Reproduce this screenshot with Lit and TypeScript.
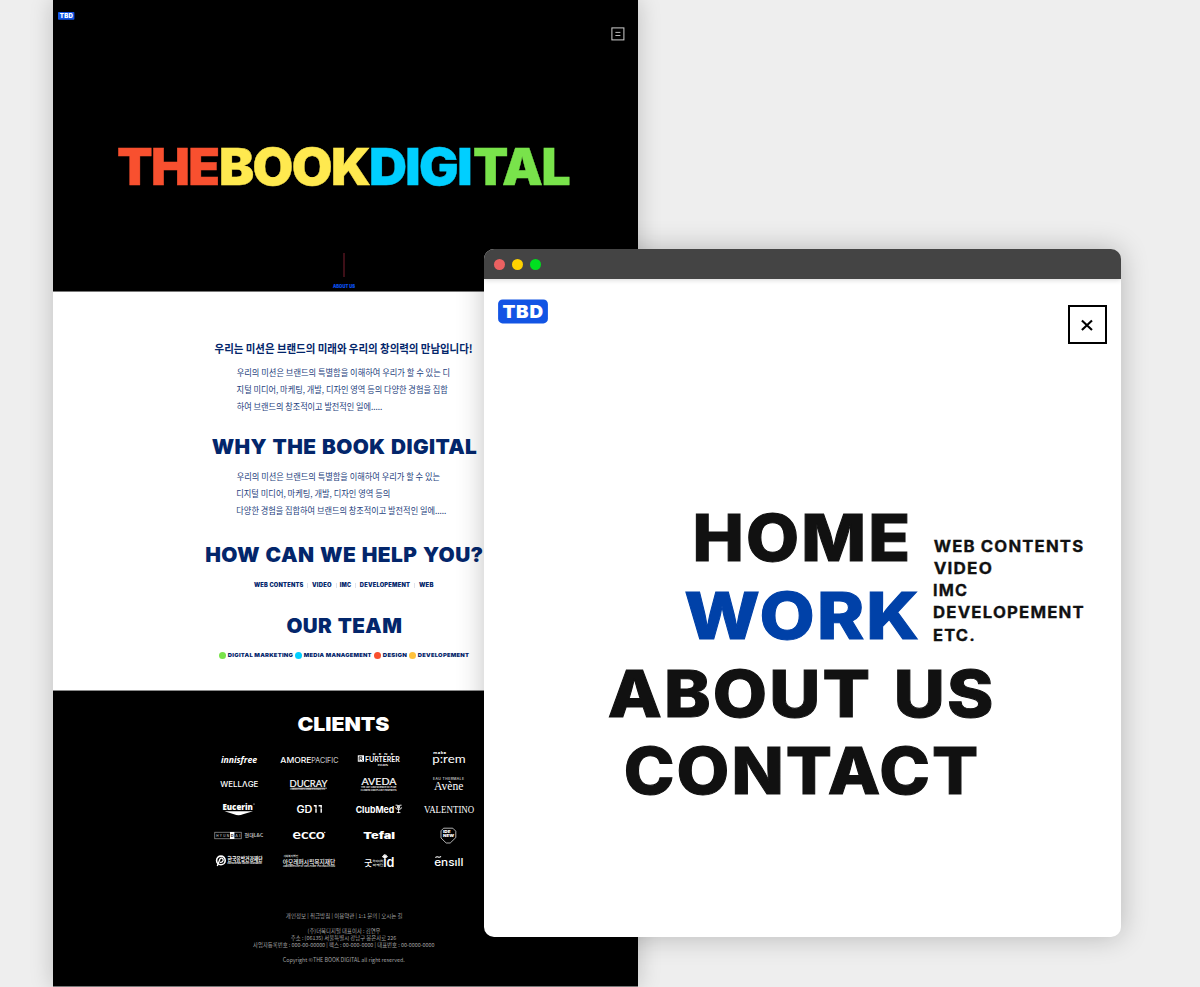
import { LitElement, html, svg, css } from "lit";
import { customElement } from "lit/decorators.js";

const SANS = 'Inter, "Liberation Sans", sans-serif';
const KR = '"Noto Sans CJK KR", "Noto Sans", sans-serif';
const SERIF = '"Liberation Serif", serif';

interface Face {
  font?: string;
  weight?: number;
  track?: number;
  words?: number;
  fill?: string;
  italic?: boolean;
  stroke?: number;
}

const pen = document.createElement("canvas").getContext("2d")!;

/* Real text whose visible extent runs exactly from x0 to x1 on the given baseline. */
function run(text: string, x0: number, x1: number, y: number, size: number, f: Face = {}) {
  const { font = SANS, weight = 800, track = 0, words = 0, fill = "#fff", italic = false, stroke = 0 } = f;
  pen.font = `${italic ? "italic " : ""}${weight} 100px ${font}`;
  const m = pen.measureText(text);
  const left = (-m.actualBoundingBoxLeft * size) / 100;
  const ink =
    ((m.actualBoundingBoxRight + m.actualBoundingBoxLeft) * size) / 100 +
    track * size * (Array.from(text).length - 1) +
    words * size * (text.split(" ").length - 1);
  const k = (x1 - x0) / ink;
  return svg`<text transform="translate(${x0 - left * k} ${y}) scale(${k} 1)"
    font-family=${font} font-weight=${weight} font-size=${size} font-style=${italic ? "italic" : "normal"}
    letter-spacing=${track * size} word-spacing=${words * size} fill=${fill} stroke=${fill} stroke-width=${stroke}>${text}</text>`;
}

/* A line of text as a block: width is the ink width, height the line box. */
function line(text: string, w: number, h: number, size: number, f: Face = {}, base = h, cls = "") {
  return html`<svg class="line ${cls}" width=${w} height=${h} viewBox="0 0 ${w} ${h}" role="img" aria-label=${text}>
    ${run(text, 0, w, base, size, f)}
  </svg>`;
}

const NAVY = "#03266b";
const navy: Face = { fill: NAVY, weight: 900, track: 0.02, words: 0.05 };
const tiny: Face = { fill: NAVY, weight: 900, track: 0.04 };
const body: Face = { fill: "#24407c", weight: 400, font: KR };
const foot: Face = { fill: "#a4a4a4", weight: 400, font: KR };

const ROWS = [
  [748, 24],
  [772, 25],
  [797, 25],
  [822, 27],
  [849, 25],
];

const LOGOS: unknown[][] = [
  [
    run("innisfree", 221, 257, 763, 8.8, { font: '"Open Sans"', weight: 700, italic: true }),
    svg`${run("AMORE", 280.5, 311, 762.6, 7.4, { weight: 500 })}${run("PACIFIC", 312, 338, 762.6, 7.4, { weight: 300 })}`,
    svg`<rect x="357.8" y="755.3" width="6.2" height="6.4" fill="#fff"/>
      <path d="M359.2 760.6V756.8h2.6v2h-2M361 759l1.8 1.6" fill="none" stroke="#000" stroke-width=".8"/>
      ${run("RENE", 373, 393, 754.8, 2.4, { weight: 600, track: 0.8 })}
      ${run("FURTERER", 365.5, 400, 762, 7.6, { font: "Lato", weight: 700 })}
      ${run("PARIS", 378, 388, 765.6, 2.6, { weight: 600 })}`,
    svg`${run("make", 433.5, 446, 754.4, 3.6, { weight: 700, track: 0.1 })}
      ${run("p:rem", 433.3, 464.8, 763.4, 11.4, { font: "Lato", weight: 400 })}`,
  ],
  [
    run("WELLΛGE", 220.5, 258, 787, 7.6, { weight: 500 }),
    svg`${run("DUCRAY", 290.3, 327.5, 787, 10.4, { font: "Lato", weight: 400, stroke: 0.2 })}
      <path d="M290.5 788.2H327" stroke="#fff" stroke-width=".6"/>
      ${run("LABORATOIRES DERMATOLOGIQUES", 290.5, 325, 790.4, 2, { weight: 500 })}`,
    svg`${run("AVEDA", 361.5, 396.5, 785.4, 9.8, { font: "Lato", weight: 400, stroke: 0.2 })}
      ${run("THE ART AND SCIENCE OF PURE", 361, 396.5, 788.2, 2, { weight: 600 })}
      ${run("FLOWER AND PLANT ESSENCES", 361, 396.5, 790.6, 2, { weight: 600 })}`,
    svg`${run("EAU THERMALE", 433.3, 464, 780.1, 2.8, { weight: 400, track: 0.12 })}
      ${run("Avène", 434, 463, 789.9, 11.6, { font: SERIF, weight: 400 })}`,
  ],
  [
    svg`${run("Eucerin", 223, 252.5, 809.6, 9.4, { font: '"Open Sans"', weight: 800 })}
      <circle cx="254" cy="804" r=".6" fill="#fff"/>
      <path d="M224.5 811.3H253L243 814.2Q238.5 816.2 234 814.2Z" fill="#fff"/>`,
    svg`${run("GD", 297, 312, 812.7, 9.8, { weight: 600 })}
      <path d="M313.8 805.8H316V812.8M318.6 805.8H321.2V812.8" stroke="#fff" stroke-width="1.4" fill="none"/>
      <path d="M314 808.2H323M305 808.7H308" stroke="#000" stroke-width=".5"/>`,
    svg`${run("ClubMed", 356, 393.8, 812.6, 9.2, { weight: 700 })}
      <path d="M395.6 805.2h2v3M401.6 805.2h-2v3M395.6 807.4q0 2 3 2t3-2M398.6 805V813M396.8 812.6h3.6" fill="none" stroke="#fff" stroke-width=".9"/>`,
    run("VALENTINO", 424, 474, 812.9, 11.4, { font: SERIF, weight: 400 }),
  ],
  [
    svg`<rect x="214.8" y="832.2" width="26.4" height="6.6" fill="none" stroke="#bbb" stroke-width=".6"/>
      <rect x="230" y="832" width="4.4" height="7" fill="#fff"/>
      ${run("HYUN", 216.5, 229, 837.1, 3.8, { weight: 500, track: 0.4, fill: "#ccc" })}
      ${run("D", 231, 233.4, 837.1, 3.8, { weight: 600, fill: "#111" })}
      ${run("AI", 235.2, 240, 837.1, 3.8, { weight: 500, track: 0.4, fill: "#ccc" })}
      ${run("현대L&C", 244.8, 263.2, 837.4, 5, { font: KR, weight: 500, fill: "#ccc" })}`,
    svg`${run("ecco", 293, 324.6, 839.4, 13.4, { font: "Lato", weight: 700 })}
      <circle cx="324.8" cy="832.4" r=".6" fill="#fff"/>`,
    run("Tefal", 363.5, 394.5, 838.8, 9.2, { weight: 900 }),
    svg`<path d="M443.6 828.2H452.8L455.8 831.2V837.6L450.2 843H446.2L441 838V830.8Z" fill="none" stroke="#ddd" stroke-width=".8"/>
      ${run("IDE", 443.2, 450.4, 833.2, 4, { weight: 900 })}
      ${run("NEW", 443.2, 454, 837.2, 4, { weight: 900 })}`,
  ],
  [
    svg`<circle cx="220.9" cy="860.4" r="4.3" fill="none" stroke="#fff" stroke-width="1.6"/>
      <path d="M217.3 866l2.5-6.6q1.2-2 2.7-.8t-.2 3.2q-1.2.8-2.2.3" fill="none" stroke="#fff" stroke-width="1.3"/>
      ${run("한국유방건강재단", 227.7, 262.6, 860.9, 5.8, { font: KR, weight: 700 })}
      ${run("Korea Breast Cancer Foundation", 227.7, 262, 864, 2.2, { weight: 600 })}`,
    svg`${run("사회복지법인", 283.5, 298, 857.2, 2.4, { font: KR, weight: 500 })}
      ${run("아모레퍼시픽복지재단", 283, 335, 863.5, 5.9, { font: KR, weight: 500 })}
      ${run("AMOREPACIFIC WELFARE FOUNDATION", 283, 335, 866.8, 2, { weight: 500 })}`,
    svg`${run("굿", 364.6, 372, 866.2, 8, { font: KR, weight: 500 })}
      ${run("아이디어", 373, 382.8, 862.3, 2.8, { font: KR, weight: 500 })}
      ${run("마케팅", 373, 382.8, 865.6, 2.8, { font: KR, weight: 500 })}
      ${run("ıd", 384, 393.6, 867, 13, { weight: 600 })}
      <path d="M384.9 859.4V857.8M382.2 856.6l1.5-.4-.4-1 .9.3.7-1.3.7 1.3.9-.3-.4 1 1.5.4-2.7 2Z" fill="#fff" stroke="#fff" stroke-width=".7"/>`,
    svg`${run("ensıll", 434.6, 462.6, 865.8, 10.6, { weight: 500 })}
      <path d="M435.4 857.6q1.4-1.4 2.8-.6t2.8-.6" fill="none" stroke="#fff" stroke-width="1.1"/>`,
  ],
];

@customElement("brand-badge")
class BrandBadge extends LitElement {
  static properties = { large: { type: Boolean } };
  declare large: boolean;
  static styles = css`
    :host { display: block; }
    svg { display: block; }
  `;
  render() {
    return this.large
      ? html`<svg width="50" height="25" viewBox="0 0 50 25">
          <rect x="0.1" y="0.4" width="49.8" height="24" rx="4.5" fill="#1254e4" />
          ${run("TBD", 4.8, 44.4, 18.9, 17.6, { weight: 900, track: 0.04 })}
        </svg>`
      : html`<svg width="17" height="8" viewBox="0 0 17 8">
          <rect x="0" y="0" width="16.4" height="7.8" rx="0.8" fill="#1254e4" />
          ${run("TBD", 1.9, 14.7, 5.9, 5.6, { weight: 900, track: 0.05 })}
        </svg>`;
  }
}

@customElement("landing-page")
class LandingPage extends LitElement {
  static styles = css`
    :host { display: block; width: 584.6px; height: 987px; box-sizing: border-box; background: #000;
      border-bottom: 1px solid #777; box-shadow: 0 0 22px rgba(0, 0, 0, 0.2); }
    .line { display: block; overflow: visible; flex: none; }
    .hero { height: 292px; box-sizing: border-box; border-bottom: 1px solid #777; background: #000; }
    .bar { display: flex; justify-content: space-between; height: 41px; padding: 12px 13px 0 5px; box-sizing: border-box; }
    .menu { display: block; margin-top: 15px; }
    .title { display: flex; padding: 106px 0 0 65.4px; }
    .book { margin-left: 2px; }
    .digi { margin-left: 1.5px; }
    .tal { margin-left: 2.8px; }
    .cue { display: flex; flex-direction: column; align-items: center; padding-right: 3px; margin-top: 68.8px; }
    .stick { width: 2px; height: 24px; background: #3d0f17; margin-bottom: 7px; }
    .about { height: 399px; box-sizing: border-box; background: #fff; border-bottom: 1px solid #8a8a8a;
      padding: 51px 3px 0 0; display: flex; flex-direction: column; align-items: center; }
    .copy { align-self: flex-start; margin-left: 184px; }
    .first { margin-top: 9px; }
    .why { margin-top: 25.6px; }
    .second { margin-top: 13.6px; }
    .how { margin-top: 29.6px; }
    .services { display: flex; align-items: center; margin-top: 20.8px; }
    .sep { width: 1px; height: 4.4px; background: #dfe3ec; margin: 0 3.9px; }
    .team { margin-top: 31.4px; }
    .roles { display: flex; align-items: center; margin-top: 18.6px; }
    .role { display: flex; align-items: center; gap: 2.3px; margin-right: 1.9px; }
    .role:last-child { margin-right: 0; }
    .dot { width: 7px; height: 7px; border-radius: 50%; }
    .green { background: #79e34b; }
    .cyan { background: #00cfff; }
    .red { background: #f8502f; }
    .amber { background: #ffc23d; }
    .clients { display: flex; flex-direction: column; align-items: center; padding: 26.4px 3px 0 0; }
    .grid { display: grid; grid-template-columns: repeat(4, 70px); margin-top: 16.4px; }
    .logo { display: block; overflow: visible; }
    .foot { display: flex; flex-direction: column; align-items: center; padding: 38px 3px 0 0; }
    .gap { height: 7.4px; }
  `;

  render() {
    const T: Face = { weight: 900, track: -0.03, stroke: 0.4 };
    return html`
      <div class="hero">
        <div class="bar">
          <brand-badge></brand-badge>
          <svg class="menu" width="14" height="14" viewBox="0 0 14 14">
            <rect x="0.9" y="0.9" width="12" height="12" fill="none" stroke="#cfcfcf" />
            <path d="M4.4 5.4H9.4M4.4 8.5H9.4" stroke="#cfcfcf" stroke-width="0.9" />
          </svg>
        </div>
        <div class="title">
          ${line("THE", 100.5, 37.2, 50.6, { ...T, fill: "#f8502f" }, 37.8)}
          ${line("BOOK", 149, 37.2, 50.6, { ...T, fill: "#ffe94f" }, 37.8, "book")}
          ${line("DIGI", 99.4, 37.2, 50.6, { ...T, fill: "#00cfff" }, 37.8, "digi")}
          ${line("TAL", 95.3, 37.2, 50.6, { ...T, fill: "#79e34b" }, 37.8, "tal")}
        </div>
        <div class="cue">
          <div class="stick"></div>
          ${line("ABOUT US", 22, 3.6, 4.7, { fill: "#0b4fe8", weight: 900, track: 0.02, stroke: 0.1 })}
        </div>
      </div>

      <div class="about">
        ${line("우리는 미션은 브랜드의 미래와 우리의 창의력의 만남입니다!", 257, 12, 11.4, { font: KR, weight: 700, fill: NAVY }, 10.4)}
        <div class="copy first">
          ${line("우리의 미션은 브랜드의 특별함을 이해하여 우리가 할 수 있는 디", 212.5, 16.8, 8.9, body, 12.2)}
          ${line("지털 미디어, 마케팅, 개발, 디자인 영역 등의 다양한 경험을 집합", 211, 16.8, 8.9, body, 12.2)}
          ${line("하여 브랜드의 창조적이고 발전적인 일에.....", 145, 16.8, 8.9, body, 12.2)}
        </div>
        ${line("WHY THE BOOK DIGITAL", 264.6, 14.4, 19.8, navy, 14.4, "why")}
        <div class="copy second">
          ${line("우리의 미션은 브랜드의 특별함을 이해하여 우리가 할 수 있는", 203, 16.8, 8.9, body, 12.2)}
          ${line("디지털 미디어, 마케팅, 개발, 디자인 영역 등의", 152.5, 16.8, 8.9, body, 12.2)}
          ${line("다양한 경험을 집합하여 브랜드의 창조적이고 발전적인 일에.....", 209, 16.8, 8.9, body, 12.2)}
        </div>
        ${line("HOW CAN WE HELP YOU?", 276.5, 14.4, 19.8, navy, 14.4, "how")}
        <div class="services">
          ${line("WEB CONTENTS", 49.4, 4.4, 5.6, tiny)}<span class="sep"></span>
          ${line("VIDEO", 19.4, 4.4, 5.6, tiny)}<span class="sep"></span>
          ${line("IMC", 11, 4.4, 5.6, tiny)}<span class="sep"></span>
          ${line("DEVELOPEMENT", 50, 4.4, 5.6, tiny)}<span class="sep"></span>
          ${line("WEB", 14.4, 4.4, 5.6, tiny)}
        </div>
        ${line("OUR TEAM", 114, 14.4, 19.8, navy, 14.4, "team")}
        <div class="roles">
          <div class="role"><i class="dot green"></i>${line("DIGITAL MARKETING", 65, 4.2, 5.4, tiny)}</div>
          <div class="role"><i class="dot cyan"></i>${line("MEDIA MANAGEMENT", 67.6, 4.2, 5.4, tiny)}</div>
          <div class="role"><i class="dot red"></i>${line("DESIGN", 23.8, 4.2, 5.4, tiny)}</div>
          <div class="role"><i class="dot amber"></i>${line("DEVELOPEMENT", 51, 4.2, 5.4, tiny)}</div>
        </div>
      </div>

      <div class="clients">
        ${line("CLIENTS", 91, 14.2, 19.4, { weight: 900 }, 14.4)}
        <div class="grid">
          ${LOGOS.map((row, r) =>
            row.map(
              (logo, c) => html`<svg class="logo" width="70" height=${ROWS[r][1]}
                viewBox="${204 + 70 * c} ${ROWS[r][0]} 70 ${ROWS[r][1]}">${logo}</svg>`
            )
          )}
        </div>
      </div>

      <div class="foot">
        ${line("개인정보 | 취급방침 | 이용약관 | 1:1 문의 | 오시는 길", 116.5, 7.2, 5.4, foot, 5.8)}
        <div class="gap"></div>
        ${line("(주)더북디지털 대표이사 : 김연우", 72.5, 7.2, 5.4, foot, 5.8)}
        ${line("주소 : (06135) 서울특별시 강남구 봉은사로 226", 105.5, 7.2, 5.4, foot, 5.8)}
        ${line("사업자등록번호 : 000-00-00000 | 팩스 : 00-000-0000 | 대표번호 : 00-0000-0000", 182, 7.2, 5.4, foot, 5.8)}
        <div class="gap"></div>
        ${line("Copyright ©THE BOOK DIGITAL all right reserved.", 122, 7.2, 5.5, foot, 5.8)}
      </div>
    `;
  }
}

@customElement("menu-window")
class MenuWindow extends LitElement {
  static styles = css`
    :host { display: block; width: 637px; height: 688px; border-radius: 10px; overflow: hidden; background: #fff;
      box-shadow: 0 0 28px rgba(0, 0, 0, 0.24); }
    .line { display: block; overflow: visible; flex: none; }
    .titlebar { display: flex; gap: 7px; align-items: center; height: 30px; padding-left: 10px; box-sizing: border-box;
      background: #444; box-shadow: 0 1px 5px rgba(0, 0, 0, 0.16); }
    .light { width: 11px; height: 11px; border-radius: 50%; }
    .close { background: #eb6161; }
    .min { background: #ffd200; }
    .max { background: #00e020; }
    .top { display: flex; justify-content: space-between; padding: 20px 14.5px 0 14px; height: 65px; box-sizing: border-box; }
    .x { display: block; margin-top: 6px; }
    .main { display: flex; padding: 170px 0 0 124px; }
    .nav { display: flex; flex-direction: column; align-items: center; gap: 30.8px; width: 385px; }
    .home { transform: translateX(1px); }
    .work { transform: translateX(0.8px); }
    .about { transform: translateX(-0.8px); }
    .contact { transform: translateX(0.5px); }
    .sub { display: flex; flex-direction: column; gap: 10.5px; margin: 27px 0 0 -58.8px; }
  `;

  render() {
    const big: Face = { fill: "#111", weight: 800, track: 0.03, words: 0.06, stroke: 1 };
    const sub: Face = { fill: "#111", weight: 700, track: 0.07, stroke: 0.3 };
    return html`
      <div class="titlebar">
        <span class="light close"></span><span class="light min"></span><span class="light max"></span>
      </div>
      <div class="top">
        <brand-badge large></brand-badge>
        <svg class="x" width="39" height="39" viewBox="0 0 39 39">
          <rect x="1" y="1" width="37" height="37" fill="none" stroke="#000" stroke-width="2" />
          <path d="M13.9 15.4L24 25.1M24 15.4L13.9 25.1" stroke="#000" stroke-width="2.1" />
        </svg>
      </div>
      <div class="main">
        <div class="nav">
          ${line("HOME", 211.4, 47, 64.2, big, 46.8, "home")}
          ${line("WORK", 232, 47, 64.2, { ...big, fill: "#0041a8" }, 46.8, "work")}
          ${line("ABOUT US", 382, 47, 64.2, big, 46.8, "about")}
          ${line("CONTACT", 350, 47, 64.2, big, 46.8, "contact")}
        </div>
        <div class="sub">
          ${line("WEB CONTENTS", 148.6, 11.5, 15.6, sub)}
          ${line("VIDEO", 57.2, 11.5, 15.6, sub)}
          ${line("IMC", 32.3, 11.5, 15.6, sub)}
          ${line("DEVELOPEMENT", 149.4, 11.5, 15.6, sub)}
          ${line("ETC.", 39.5, 11.5, 15.6, sub)}
        </div>
      </div>
    `;
  }
}

@customElement("app-root")
class AppRoot extends LitElement {
  static styles = css`
    :host { display: block; position: relative; width: 1200px; height: 987px; overflow: hidden; background: #eee;
      padding-left: 53px; box-sizing: border-box; }
    .window { position: absolute; left: 484px; top: 249px; }
  `;
  render() {
    return html`<landing-page></landing-page><menu-window class="window"></menu-window>`;
  }
}
